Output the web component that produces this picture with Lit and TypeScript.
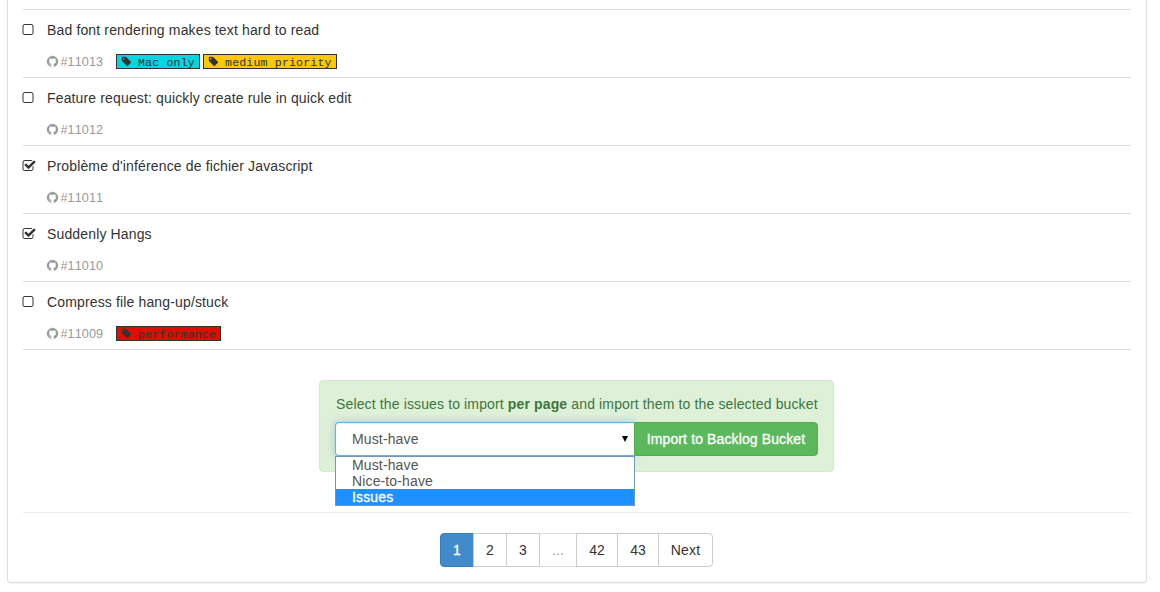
import { LitElement, html, css, svg, nothing } from "lit";
import { customElement, property, state } from "lit/decorators.js";
import { classMap } from "lit/directives/class-map.js";
import { styleMap } from "lit/directives/style-map.js";

const ICONS: Record<string, string> = {
  unchecked:
    "M1312 256h-832q-66 0-113 47t-47 113v832q0 66 47 113t113 47h832q66 0 113-47t47-113v-832q0-66-47-113t-113-47zm288 160v832q0 119-84.5 203.5t-203.5 84.5h-832q-119 0-203.5-84.5t-84.5-203.5v-832q0-119 84.5-203.5t203.5-84.5h832q119 0 203.5 84.5t84.5 203.5z",
  checked:
    "M1472 930v318q0 119-84.5 203.5t-203.5 84.5h-832q-119 0-203.5-84.5t-84.5-203.5v-832q0-119 84.5-203.5t203.5-84.5h832q63 0 117 25 15 7 18 23 3 17-9 29l-49 49q-10 10-23 10-3 0-9-2-23-6-45-6h-832q-66 0-113 47t-47 113v832q0 66 47 113t113 47h832q66 0 113-47t47-113v-254q0-13 9-22l64-64q10-10 23-10 6 0 12 3 20 8 20 29zm231-489l-814 814q-24 24-57 24t-57-24l-430-430q-24-24-24-57t24-57l110-110q24-24 57-24t57 24l263 263 647-647q24-24 57-24t57 24l110 110q24 24 24 57t-24 57z",
  github:
    "M896 128q209 0 385.5 103t279.5 279.5 103 385.5q0 251-146.5 451.5t-378.5 277.5q-27 5-40-7t-13-30q0-3 .5-76.5t.5-134.5q0-97-52-142 57-6 102.5-18t94-39 81-66.5 53-105 20.5-150.5q0-119-79-206 37-91-8-204-28-9-81 11t-92 44l-38 24q-93-26-192-26t-192 26q-16-11-42.5-27t-83.5-38.5-85-13.5q-45 113-8 204-79 87-79 206 0 85 20.5 150t52.5 105 80.5 67 94 39 102.5 18q-39 36-49 103-21 10-45 15t-57 5-65.5-21.5-55.5-62.5q-19-32-48.5-52t-49.5-24l-20-3q-21 0-29 4.5t-5 11.5 9 14 13 12l7 5q22 10 43.5 38t31.5 51l10 23q13 38 44 61.5t67 30 69.5 7 55.5-3.5l23-4q0 38 .5 88.5t.5 54.5q0 18-13 30t-40 7q-232-77-378.5-277.5t-146.5-451.5q0-209 103-385.5t279.5-279.5 385.5-103z",
  tag: "M576 448q0-53-37.5-90.5t-90.5-37.5-90.5 37.5-37.5 90.5 37.5 90.5 90.5 37.5 90.5-37.5 37.5-90.5zm1067 576q0 53-37 90l-491 492q-39 37-91 37-53 0-90-37l-715-716q-38-37-64.5-101t-26.5-117v-416q0-52 38-90t90-38h416q53 0 117 26.5t102 64.5l715 714q37 39 37 91z",
};

const icon = (name: string) =>
  html`<svg class="icon ${name}" viewBox="0 0 1792 1792" aria-hidden="true">${svg`<path d=${ICONS[name]} />`}</svg>`;

interface Label {
  text: string;
  color: string;
}
interface Issue {
  id: number;
  title: string;
  checked: boolean;
  labels: Label[];
}

@customElement("issue-row")
class IssueRow extends LitElement {
  @property({ attribute: false }) issue!: Issue;

  static styles = css`
    :host {
      display: block;
      height: 67px;
      border-bottom: 1px solid #ddd;
    }
    .icon {
      display: block;
      fill: currentColor;
      flex: none;
    }
    .row {
      display: grid;
      grid-template-columns: 24px 1fr;
      padding-top: 10px;
    }
    .box {
      height: 20px;
      display: flex;
      align-items: center;
      cursor: pointer;
    }
    .unchecked {
      width: 14px;
      height: 14px;
      margin-left: -2px;
    }
    .checked {
      width: 14px;
      height: 14px;
      margin-left: -1px;
    }
    .title {
      line-height: 20px;
      letter-spacing: 0.145px;
      white-space: nowrap;
    }
    .meta {
      display: flex;
      align-items: center;
      height: 17px;
      margin-top: 13px;
      font-size: 12.6px;
      color: #999;
    }
    .number {
      width: 55.5px;
      line-height: 17px;
      padding-top: 1px;
      font-kerning: none;
      letter-spacing: 0.1px;
    }
    .github {
      width: 13px;
      height: 13px;
      margin: 0 1.5px 0 -1px;
      stroke: currentColor;
      stroke-width: 30px;
    }
    .label {
      display: flex;
      align-items: center;
      box-sizing: border-box;
      height: 15px;
      margin-right: 3px;
      padding: 0 4.2px 0 4px;
      border: 1px solid #333;
      color: #333;
      font: 11.6px/13px "Liberation Mono", monospace;
      letter-spacing: 0.15px;
      white-space: pre;
    }
    .text {
      margin-top: 2px;
    }
    .tag {
      width: 11px;
      height: 11px;
      margin: -1px 6px 0 0;
    }
  `;

  render() {
    const { id, title, checked, labels } = this.issue;
    return html`<div class="row">
      <div class="box">${icon(checked ? "checked" : "unchecked")}</div>
      <div>
        <div class="title">${title}</div>
        <div class="meta">
          ${icon("github")}<span class="number">#${id}</span>
          ${labels.map(
            (l) =>
              html`<span class="label" style=${styleMap({ backgroundColor: l.color })}
                >${icon("tag")}<span class="text">${l.text}</span></span
              >`
          )}
        </div>
      </div>
    </div>`;
  }
}

@customElement("import-box")
class ImportBox extends LitElement {
  @state() private open = true;
  @state() private selected = "Must-have";
  private options = ["Must-have", "Nice-to-have", "Issues"];

  static styles = css`
    :host {
      display: block;
      box-sizing: border-box;
      width: 515px;
      height: 92px;
      padding: 13px 15px;
      border: 1px solid #d6e9c6;
      border-radius: 4px;
      background: #dff0d8;
      color: #3c763d;
      letter-spacing: 0.135px;
    }
    .hint {
      line-height: 20px;
      padding-left: 1px;
      white-space: nowrap;
    }
    .group {
      display: flex;
      margin-top: 8px;
    }
    .picker {
      position: relative;
      width: 299px;
      height: 34px;
    }
    .select {
      box-sizing: border-box;
      display: flex;
      align-items: center;
      justify-content: space-between;
      height: 34px;
      padding: 0 6px 0 16px;
      border: 1px solid #66afe9;
      border-right: 0;
      border-radius: 4px 0 0 4px;
      background: #fff;
      color: #555;
      box-shadow: inset 0 1px 1px rgba(0, 0, 0, 0.075), 0 0 8px rgba(102, 175, 233, 0.6);
    }
    .arrow {
      width: 6px;
      height: 6px;
      fill: #000;
    }
    .menu {
      position: absolute;
      z-index: 2;
      top: 34px;
      left: 0;
      box-sizing: border-box;
      width: 300px;
      border: 1px solid #7096b9;
      background: #fff;
      color: #555;
    }
    .option {
      height: 16px;
      line-height: 16px;
      padding-left: 16px;
    }
    .active {
      background: #1e90ff;
      color: #fff;
      -webkit-text-stroke: 0.3px #fff;
    }
    .button {
      position: relative;
      box-sizing: border-box;
      width: 184px;
      height: 34px;
      border: 1px solid #4cae4c;
      border-radius: 0 4px 4px 0;
      background: #5cb85c;
      color: #fff;
      text-align: center;
      font: inherit;
      letter-spacing: 0.12px;
      line-height: 20px;
      padding: 0;
      white-space: nowrap;
      -webkit-text-stroke: 0.3px #fff;
    }
  `;

  private choose(o: string) {
    this.selected = o;
    this.open = false;
  }

  render() {
    return html`
      <div class="hint">
        Select the issues to import <b>per page</b> and import them to the selected bucket
      </div>
      <div class="group">
        <div class="picker">
          <div class="select" @click=${() => (this.open = !this.open)}>
            <span>${this.selected}</span>
            <svg class="arrow" viewBox="0 0 6 6"><path d="M0 0H6L3 6Z" /></svg>
          </div>
          ${this.open
            ? html`<div class="menu">
                ${this.options.map(
                  (o) =>
                    html`<div
                      class=${classMap({ option: true, active: o === "Issues" })}
                      @click=${() => this.choose(o)}
                    >
                      ${o}
                    </div>`
                )}
              </div>`
            : nothing}
        </div>
        <button class="button">Import to Backlog Bucket</button>
      </div>
    `;
  }
}

@customElement("page-nav")
class PageNav extends LitElement {
  private pages = ["1", "2", "3", "...", "42", "43", "Next"];

  static styles = css`
    :host {
      display: grid;
      grid-template-columns: repeat(3, 33px) 37px 41px 41px 55px;
      height: 34px;
    }
    .page {
      box-sizing: border-box;
      height: 34px;
      padding: 6px 0;
      border: 1px solid #ccc;
      margin-right: -1px;
      line-height: 20px;
      text-align: center;
      background: #fff;
      color: #333;
    }
    .page:first-child {
      border-radius: 4px 0 0 4px;
    }
    .page:last-child {
      margin-right: 0;
      letter-spacing: 0.15px;
      border-radius: 0 4px 4px 0;
    }
    .active {
      background: #428bca;
      border-color: #357ebd;
      color: #fff;
      -webkit-text-stroke: 0.3px #fff;
    }
    .gap {
      color: #999;
      border-color: #ddd #ccc;
    }
  `;

  render() {
    return this.pages.map(
      (p) =>
        html`<span class=${classMap({ page: true, active: p === "1", gap: p === "..." })}>${p}</span>`
    );
  }
}

@customElement("app-root")
class AppRoot extends LitElement {
  private issues: Issue[] = [
    {
      id: 11013,
      title: "Bad font rendering makes text hard to read",
      checked: false,
      labels: [
        { text: "Mac only", color: "#02d7e1" },
        { text: "medium priority", color: "#fbca04" },
      ],
    },
    { id: 11012, title: "Feature request: quickly create rule in quick edit", checked: false, labels: [] },
    { id: 11011, title: "Problème d'inférence de fichier Javascript", checked: true, labels: [] },
    { id: 11010, title: "Suddenly Hangs", checked: true, labels: [] },
    {
      id: 11009,
      title: "Compress file hang-up/stuck",
      checked: false,
      labels: [{ text: "performance", color: "#e10c02" }],
    },
  ];

  static styles = css`
    :host {
      display: block;
      box-sizing: border-box;
      height: 592px;
      padding: 0 13px 9px 7px;
      overflow: hidden;
      background: #fff;
      color: #333;
      font: 14px/20px "Liberation Sans", Arial, sans-serif;
    }
    .panel {
      box-sizing: border-box;
      height: 583px;
      padding: 9px 15px 15px;
      border: 1px solid #ddd;
      border-top: 0;
      border-radius: 0 0 4px 4px;
      box-shadow: 0 1px 1px rgba(0, 0, 0, 0.05);
    }
    .list {
      border-top: 1px solid #ddd;
    }
    .center {
      display: flex;
      justify-content: center;
      margin-top: 30px;
      padding-right: 1px;
    }
    .rule {
      height: 1px;
      margin: 40px 0 20px;
      background: #eee;
    }
    .pager {
      display: flex;
      justify-content: center;
      padding-right: 1px;
    }
  `;

  render() {
    return html`<div class="panel">
      <div class="list">${this.issues.map((i) => html`<issue-row .issue=${i}></issue-row>`)}</div>
      <div class="center"><import-box></import-box></div>
      <div class="rule"></div>
      <div class="pager"><page-nav></page-nav></div>
    </div>`;
  }
}
